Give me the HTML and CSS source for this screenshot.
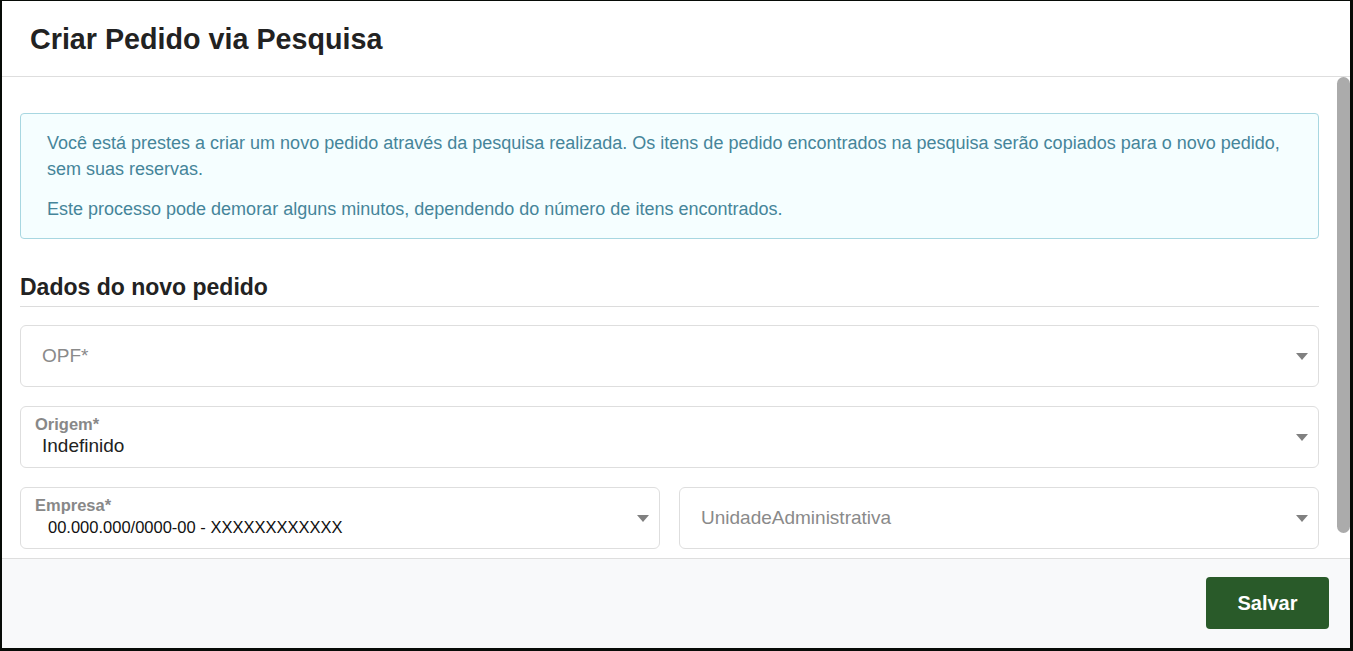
FILE: index.html
```html
<!DOCTYPE html>
<html lang="pt-BR">
<head>
    <meta charset="UTF-8">
    <title>Criar Pedido via Pesquisa</title>
    <link rel="stylesheet" href="styles.css">
</head>
<body>
    <div class="modal">
        <div class="modal-header">
            <h2>Criar Pedido via Pesquisa</h2>
        </div>

        <div class="modal-body">
            <div class="modal-content">
                <div class="alert-info">
                    <p>Você está prestes a criar um novo pedido através da pesquisa realizada. Os itens de pedido encontrados na pesquisa serão copiados para o novo pedido, sem suas reservas.</p>
                    <p>Este processo pode demorar alguns minutos, dependendo do número de itens encontrados.</p>
                </div>

                <h3 class="section-title">Dados do novo pedido</h3>

                <div class="form-rows">
                    <div class="select">
                        <span class="placeholder">OPF*</span>
                        <span class="caret"></span>
                    </div>

                    <div class="select filled">
                        <span class="label">Origem*</span>
                        <span class="value">Indefinido</span>
                        <span class="caret"></span>
                    </div>

                    <div class="row-2">
                        <div class="select filled">
                            <span class="label">Empresa*</span>
                            <span class="value indent">00.000.000/0000-00 - XXXXXXXXXXXX</span>
                            <span class="caret"></span>
                        </div>
                        <div class="select">
                            <span class="placeholder">UnidadeAdministrativa</span>
                            <span class="caret"></span>
                        </div>
                    </div>
                </div>
            </div>

            <!-- scrollbar of the dialog body -->
            <div class="scrollbar">
                <div class="scrollbar-thumb"></div>
            </div>
        </div>

        <div class="modal-footer">
            <button class="btn-save">Salvar</button>
        </div>
    </div>
</body>
</html>
```

FILE: styles.css
```css
* {
    margin: 0;
    padding: 0;
    box-sizing: border-box;
}

html, body {
    height: 100%;
    overflow: hidden;
}

body {
    background: #070b07;
    padding: 1px 3px 3px 2px;
    font-family: "Liberation Sans", Arial, sans-serif;
}

.modal {
    background: white;
    height: 647px;
    display: flex;
    flex-direction: column;
}

.modal-header {
    height: 76px;
    flex-shrink: 0;
    display: flex;
    align-items: center;
    padding: 0 28px;
    border-bottom: 1px solid #dedede;
}

.modal-header h2 {
    font-size: 28.7px;
    font-weight: bold;
    color: #222;
    margin-top: 1px;
}

.modal-body {
    flex: 1;
    min-height: 0;
    display: flex;
}

.modal-content {
    flex: 1;
    overflow: hidden;
    padding: 36px 18px 0 18px;
}

.scrollbar {
    width: 13px;
    flex-shrink: 0;
    background: white;
}

.scrollbar-thumb {
    height: 456px;
    background: #ababab;
    border-radius: 7px;
}

.alert-info {
    background: #f5feff;
    border: 1px solid #a8d7e1;
    border-radius: 4px;
    padding: 16px 26px;
    color: #45859a;
    font-size: 18px;
    line-height: 26px;
}

.alert-info p + p {
    margin-top: 14px;
}

.section-title {
    margin-top: 35px;
    font-size: 23px;
    font-weight: bold;
    color: #222;
    padding-bottom: 6px;
    border-bottom: 1px solid #dcdcdc;
    line-height: 26px;
}

.form-rows {
    margin-top: 18px;
    display: flex;
    flex-direction: column;
    gap: 19px;
}

.row-2 {
    display: grid;
    grid-template-columns: 1fr 1fr;
    gap: 19px;
}

.select {
    position: relative;
    height: 62px;
    border: 1px solid #dedede;
    border-radius: 6px;
    padding: 0 40px 0 21px;
    display: flex;
    flex-direction: column;
    justify-content: center;
}

.placeholder {
    color: #8a8a8a;
    font-size: 19px;
}

.select.filled {
    padding-left: 14px;
    padding-top: 8px;
    justify-content: flex-start;
}

.label {
    color: #888;
    font-size: 16.5px;
    font-weight: bold;
    line-height: 18px;
}

.value {
    color: #222;
    font-size: 19px;
    line-height: 26px;
    padding-left: 7px;
}

.value.indent {
    padding-left: 13px;
    font-size: 16.5px;
    color: #111;
}

.caret {
    position: absolute;
    right: 10px;
    top: 50%;
    margin-top: -3px;
    width: 0;
    height: 0;
    border-left: 6px solid transparent;
    border-right: 6px solid transparent;
    border-top: 7px solid #808080;
}

.modal-footer {
    height: 90px;
    flex-shrink: 0;
    background: #f8f9fa;
    border-top: 1px solid #dedede;
    display: flex;
    justify-content: flex-end;
    align-items: center;
    padding: 0 21px 2px 0;
}

.btn-save {
    width: 123px;
    height: 52px;
    padding-top: 2px;
    background: #295a29;
    color: white;
    border: none;
    border-radius: 4px;
    font-family: "Liberation Sans", Arial, sans-serif;
    font-size: 20px;
    font-weight: bold;
    cursor: pointer;
}
```
